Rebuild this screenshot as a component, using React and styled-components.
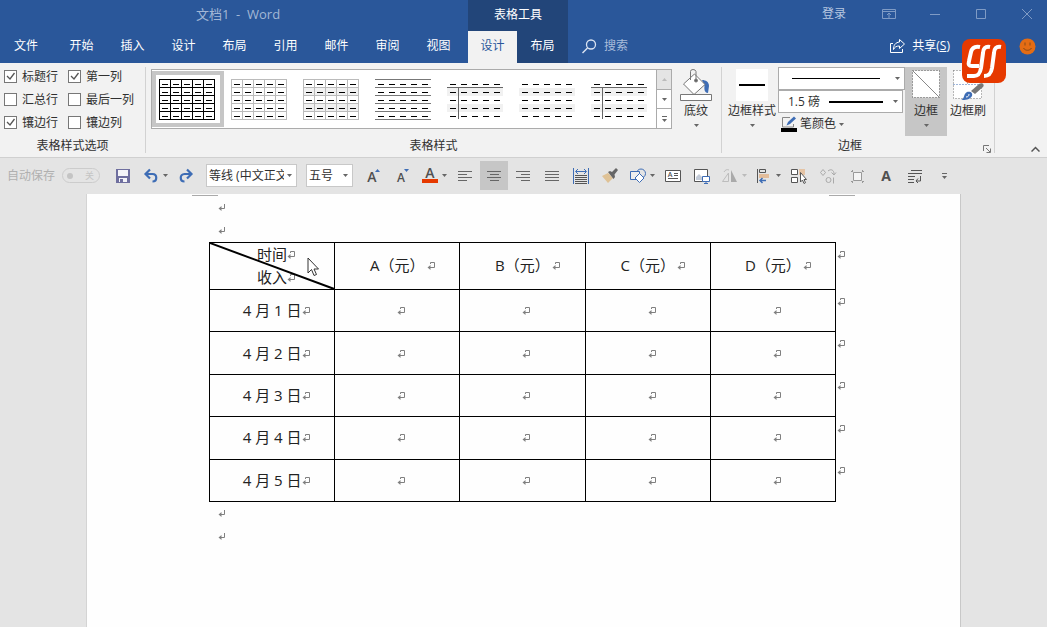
import React from "react";
import styled, { createGlobalStyle, css } from "styled-components";

const color = {
  blue: "#2a579a",
  darkBlue: "#224579",
  ribbon: "#f2f2f2",
  bar: "#e4e4e4",
  active: "#c6c6c6",
  border: "#ababab",
  text: "#303030",
  accent: "#3e6db5",
  red: "#e63900",
};

const GlobalStyle = createGlobalStyle`
  * {
    box-sizing: border-box;
  }

  body {
    margin: 0;
    background: ${color.bar};
    color: ${color.text};
    font: 12px/18px "Open Sans", "Noto Sans CJK SC", sans-serif;
  }

  button, select, input {
    margin: 0;
    padding: 0;
    font: inherit;
    color: inherit;
  }

  button {
    border: 0;
    background: none;
  }

  svg {
    display: block;
    flex-shrink: 0;
  }
`;

const Window = styled.div`
  position: relative;
  display: flex;
  flex-direction: column;
  min-height: 100vh;
  overflow: hidden;
`;

/* header */

const Header = styled.header`
  display: flex;
  height: 63px;
  background: ${color.blue};
  color: #fff;
`;

const HeaderBlock = styled.div`
  display: flex;
  flex-direction: column;
  flex: ${(props) => (props.$grow ? "1" : "none")};
  background: ${(props) => (props.$dark ? color.darkBlue : "none")};
`;

const TitleRow = styled.div`
  display: flex;
  align-items: center;
  justify-content: ${(props) => (props.$end ? "flex-end" : "center")};
  height: 31px;
  padding: ${(props) => (props.$end ? "0 0 4px" : "0 0 2px")};
`;

const DocTitle = styled.h1`
  margin: 0;
  padding: 0 0 2px 8px;
  font-size: 13px;
  font-weight: 400;
  color: #a3b7d6;
  white-space: pre;
`;

const Tabs = styled.nav`
  display: flex;
  height: 32px;
  padding-right: ${(props) => (props.$main ? "4px" : "0")};
`;

const Tab = styled.button`
  width: ${(props) => (props.$first ? "56px" : "51px")};
  padding: 0 ${(props) => (props.$first ? "4px" : "0")} 3px 0;
  color: #fff;

  ${(props) =>
    props.$active &&
    css`
      width: 49px;
      background: ${color.ribbon};
      color: ${color.blue};
    `}
`;

const ToolRow = styled.div`
  display: flex;
  align-items: center;
  justify-content: space-between;
  height: 32px;
  padding: 0 11px 2px 14px;
`;

const HeaderButton = styled.button`
  display: flex;
  align-items: center;
  gap: 7px;
  color: ${(props) => (props.$dim ? "#a9bcda" : "#fff")};
`;

const WindowButton = styled.button`
  display: flex;
  align-items: center;
  justify-content: center;
  width: 46px;
  height: 24px;
  color: #7f9bc5;

  &:last-child {
    margin-right: -3px;
  }
`;

const SignIn = styled.button`
  margin-right: 20px;
  color: #b8c8e0;
`;

const Account = styled.div`
  display: flex;
  align-items: center;
  gap: 69px;
`;

const Badge = styled.div`
  position: absolute;
  top: 39px;
  right: 41px;
  width: 44px;
  height: 44px;
`;

/* ribbon */

const Ribbon = styled.section`
  display: flex;
  height: 95px;
  border-bottom: 1px solid #d0d0d0;
  background: ${color.ribbon};
`;

const Group = styled.fieldset`
  position: relative;
  display: flex;
  flex-direction: column;
  justify-content: space-between;
  min-width: 0;
  margin: 4px 0;
  padding: 0;
  border: 0;
  border-right: 1px solid #d2d2d2;
`;

const GroupBody = styled.div`
  display: flex;
  align-items: flex-start;
  gap: ${(props) => props.$gap || "0"};
  padding: ${(props) => props.$pad || "0"};
`;

const GroupName = styled.div`
  height: 14px;
  padding-right: ${(props) => (props.$launcher ? "16px" : "0")};
  line-height: 14px;
  text-align: center;
`;

const Launcher = styled.button`
  position: absolute;
  right: 3px;
  bottom: 0;
`;

const Options = styled.div`
  display: grid;
  grid-template-columns: 64px 77px;
  grid-auto-rows: 23px;
`;

const CheckLabel = styled.label`
  display: flex;
  align-items: center;
  align-self: start;
  gap: 5px;
  height: 19px;
  white-space: nowrap;
`;

const CheckBox = styled.span`
  display: grid;
  width: 13px;
  height: 13px;
  border: 1px solid #777;
  background: #fff;

  input, svg {
    grid-area: 1 / 1;
  }

  input {
    width: 11px;
    height: 11px;
    appearance: none;
  }

  svg {
    display: none;
    pointer-events: none;
  }

  input:checked + svg {
    display: block;
  }
`;

const Gallery = styled.div`
  display: flex;
  height: 60px;
  margin-top: 2px;
  border: 1px solid ${color.border};
  background: #fff;
`;

const Thumb = styled.button`
  display: flex;
  align-items: center;
  width: 72px;
  height: 56px;
  margin-top: 1px;
  padding-left: 3px;
  border: 4px solid ${(props) => (props.$selected ? color.active : "transparent")};
`;

const Scroller = styled.div`
  display: flex;
  flex-direction: column;
  width: 15px;
  border-left: 1px solid ${color.border};

  button {
    display: flex;
    flex: 1;
    align-items: center;
    justify-content: center;
  }

  button + button {
    border-top: 1px solid ${color.border};
  }

  button:disabled {
    background: #e4e4e4;
    color: #bbb;
  }
`;

const BigButton = styled.button`
  display: flex;
  flex-direction: column;
  align-items: center;
  width: ${(props) => props.$width};
  height: 69px;
  padding-top: 2px;
  background: ${(props) => (props.$active ? color.active : "none")};
  white-space: nowrap;

  > svg + svg {
    margin-top: 4px;
  }
`;

const Fields = styled.div`
  display: flex;
  flex-direction: column;
  align-items: flex-start;
  width: 127px;
`;

const SelectBox = styled.div`
  display: grid;
  align-items: center;
  width: ${(props) => props.$width};
  height: 23px;
  border: 1px solid ${(props) => (props.$light ? "#c8c8c8" : color.border)};
  background: #fff;

  > * {
    grid-area: 1 / 1;
  }

  > svg {
    pointer-events: none;
  }
`;

const Select = styled.select`
  width: 100%;
  height: 21px;
  padding: 0 ${(props) => (props.$tight ? "12px" : "15px")} 0
    ${(props) => (props.$tight ? "2px" : "9px")};
  border: 0;
  appearance: none;
  background: none;
  overflow: hidden;
`;

const ArrowSlot = styled.span`
  justify-self: end;
  padding-right: 4px;
  pointer-events: none;
`;

const PenButton = styled.button`
  display: flex;
  align-items: center;
  gap: 3px;
  height: 22px;
  padding-left: 3px;
`;

const Collapse = styled.button`
  align-self: flex-end;
  margin: 0 7px 5px auto;
`;

/* quick access bar */

const QuickBar = styled.div`
  display: flex;
  align-items: center;
  gap: 1px;
  height: 36px;
  padding: 0 0 1px 7px;
`;

const AutoSave = styled.label`
  display: flex;
  align-items: center;
  gap: 7px;
  width: 101px;
  color: #b0b0b0;
  white-space: nowrap;
`;

const Toggle = styled.span`
  display: flex;
  align-items: center;
  justify-content: space-between;
  width: 38px;
  height: 15px;
  padding: 0 5px 0 4px;
  border: 1px solid #ccc;
  border-radius: 8px;
  font-size: 9px;
  line-height: 12px;
  color: #c4c4c4;

  input {
    width: 6px;
    height: 6px;
    border-radius: 50%;
    appearance: none;
    background: #c4c4c4;
  }
`;

const Tool = styled.button`
  display: flex;
  align-items: center;
  justify-content: ${(props) => (props.$split ? "flex-start" : "center")};
  gap: 4px;
  flex-shrink: 0;
  width: ${(props) => (props.$split ? "33px" : "28px")};
  height: 29px;
  padding-left: ${(props) => (props.$split ? "5px" : "0")};
  background: ${(props) => (props.$active ? color.active : "none")};
  color: ${(props) => (props.disabled ? "#bdbdbd" : "#555")};

  svg {
    overflow: visible;
  }

  text {
    fill: #505050;
    stroke: none;
    font-weight: ${(props) => (props.$bold ? "700" : "600")};
    text-anchor: middle;
  }
`;

const Combos = styled.div`
  display: flex;
  gap: 9px;
  padding: 0 5px;
`;

/* document */

const Page = styled.main`
  flex: 1;
  width: 100%;
  max-width: 875px;
  min-height: 433px;
  margin: 0 auto;
  border-left: 1px solid #d4d4d4;
  border-right: 1px solid #c8c8c8;
  background: #fefefe;
`;

const Corners = styled.div`
  display: flex;
  justify-content: space-between;
  height: 2px;
  padding: 0 105px;

  span {
    width: 26px;
    border-bottom: 1px solid #aaa;
  }
`;

const Content = styled.div`
  padding-left: 122px;
`;

const Paragraph = styled.p`
  display: flex;
  align-items: center;
  height: 23px;
  margin: 0;
  padding-left: 9px;
`;

const Table = styled.table`
  width: 644px;
  height: 260px;
  border-collapse: collapse;
  table-layout: fixed;
  color: #222;
  font-size: 15px;
  line-height: 23px;
  text-align: center;

  th, td {
    padding: 0;
    border: 1px solid #000;
    font-weight: 400;
  }

  thead tr {
    height: 47px;
  }

  thead th + th {
    padding-bottom: 2px;
  }
`;

const RowEnd = styled.td`
  && {
    width: 17px;
    padding-left: 1px;
    border: 0;
    text-align: left;
    vertical-align: top;
    line-height: 22px;
  }
`;

const Split = styled.th`
  position: relative;

  div {
    height: 23px;
    line-height: 22px;
  }

  > svg {
    position: absolute;
    inset: 0;
    width: 100%;
    height: 100%;
  }
`;

const Mark = styled.svg`
  && {
    display: inline-block;
  }
  width: 8px;
  height: 8px;
  margin-left: ${(props) => (props.$gap ? "2px" : "0")};
  margin-right: ${(props) => (props.$gap ? "-10px" : "-8px")};
  vertical-align: 1px;
  fill: none;
  stroke: #808080;
`;

const Pointer = styled.svg`
  position: absolute;
  top: 257px;
  left: 307px;
`;

function Arrow({ fill = "#666" }) {
  return (
    <svg width="5" height="3" viewBox="0 0 5 3">
      <path d="M0 0h5L2.5 3z" fill={fill} />
    </svg>
  );
}

function MoreArrow() {
  return (
    <svg width="7" height="6">
      <path d="M1 .5h5" stroke="#666" />
      <path d="M1 3h5L3.500 6z" fill="#666" />
    </svg>
  );
}

function CellMark({ gap }) {
  return (
    <Mark viewBox="0 0 8 8" $gap={gap} aria-hidden="true">
      <path d="M3.500 2V.5h4v5H2" />
      <path d="M3.500 3v5L.5 5.500z" fill="#808080" stroke="none" />
    </Mark>
  );
}

function ParaMark() {
  return (
    <Mark viewBox="0 0 8 8" aria-hidden="true">
      <path d="M6.500 0v4.500H2" />
      <path d="M3.500 2v5L.5 4.500z" fill="#808080" stroke="none" />
    </Mark>
  );
}

function Icon({ size = 16, children, stroke = "currentColor" }) {
  return (
    <svg width={size} height={size} viewBox={`0 0 ${size} ${size}`} fill="none" stroke={stroke}>
      {children}
    </svg>
  );
}

function TableThumb({ line, rows, header, shade }) {
  const steps = [0, 1, 2, 3, 4, 5];
  return (
    <svg width="56" height="41" viewBox="0 0 56 41" shapeRendering="crispEdges">
      {shade && <path d="M0 8.500h56v8H0zM0 24.500h56v8H0z" fill="#f1f1f1" />}
      {(line || rows) &&
        steps.map((i) => <path key={i} d={`M0 ${i * 8 + 0.5}h56`} stroke={line || "#777"} />)}
      {line && steps.map((i) => <path key={i} d={`M${i * 11 + 0.5} 0v41`} stroke={line} />)}
      {header && <path d="M0 8.500h56M11.500 8v32" stroke="#666" />}
      {[5, 13, 21, 29, 37].map((y) => (
        <path key={y} d={`M3 ${y + 0.5}h51`} stroke="#000" strokeDasharray="6 5" />
      ))}
    </svg>
  );
}

function Check({ label, checked }) {
  return (
    <CheckLabel>
      <CheckBox>
        <input type="checkbox" defaultChecked={checked} />
        <svg width="11" height="11" fill="none" stroke="#555">
          <path d="M2 5l3 3 4.500-6" strokeWidth="1.300" />
        </svg>
      </CheckBox>
      {label}
    </CheckLabel>
  );
}

const tabs = ["开始", "插入", "设计", "布局", "引用", "邮件", "审阅", "视图"];

const options = [
  ["标题行", true],
  ["第一列", true],
  ["汇总行", false],
  ["最后一列", false],
  ["镶边行", true],
  ["镶边列", false],
];

const thumbs = [
  { line: "#000" },
  { line: "#bbb" },
  { line: "#bbb", shade: true },
  { rows: true },
  { header: true, shade: true },
  { shade: true },
  { header: true, shade: true },
];

const aligns = [
  { name: "左对齐", d: "M0 3.500h14M0 6.500h9M0 9.500h14M0 12.500h9" },
  { name: "居中", d: "M0 3.500h14M3 6.500h9M0 9.500h14M3 12.500h9", active: true },
  { name: "右对齐", d: "M0 3.500h14M5 6.500h9M0 9.500h14M5 12.500h9" },
  { name: "两端对齐", d: "M0 3.500h14M0 6.500h14M0 9.500h14M0 12.500h14" },
];

function TopBar() {
  return (
    <Header>
      <HeaderBlock>
        <TitleRow>
          <DocTitle>{"文档1  -  Word"}</DocTitle>
        </TitleRow>
        <Tabs $main>
          <Tab $first>文件</Tab>
          {tabs.map((name) => (
            <Tab key={name}>{name}</Tab>
          ))}
        </Tabs>
      </HeaderBlock>
      <HeaderBlock $dark>
        <TitleRow>表格工具</TitleRow>
        <Tabs>
          <Tab $active>设计</Tab>
          <Tab>布局</Tab>
        </Tabs>
      </HeaderBlock>
      <HeaderBlock $grow>
        <TitleRow $end>
          <SignIn>登录</SignIn>
          <WindowButton aria-label="功能区显示选项">
            <Icon size={14}>
              <path d="M.5 2.500h13v9H.5zM.5 4.500h13M7 11V6M5 8l2-2 2 2" />
            </Icon>
          </WindowButton>
          <WindowButton aria-label="最小化">
            <Icon size={10}>
              <path d="M0 5.500h10" />
            </Icon>
          </WindowButton>
          <WindowButton aria-label="最大化">
            <Icon size={10}>
              <path d="M.5 .5h9v9h-9z" />
            </Icon>
          </WindowButton>
          <WindowButton aria-label="关闭">
            <Icon size={10}>
              <path d="M0 0l10 10M10 0L0 10" />
            </Icon>
          </WindowButton>
        </TitleRow>
        <ToolRow>
          <HeaderButton $dim>
            <Icon size={15} stroke="#dbe4f2">
              <circle cx="9" cy="5.500" r="4.500" strokeWidth="1.300" />
              <path d="M5.500 9L.5 14" strokeWidth="1.500" />
            </Icon>
            搜索
          </HeaderButton>
          <Account>
            <HeaderButton>
              <Icon>
                <path d="M4 5.500H1.500v9h12V11" />
                <path d="M10.500 1.500L15.500 6l-5 4.500V8C7.500 8 5.500 9 4.500 11.500 4.500 7 6.500 4.500 10.500 4z" />
              </Icon>
              <span>
                共享(<u>S</u>)
              </span>
            </HeaderButton>
            <HeaderButton aria-label="反馈">
              <svg width="17" height="17">
                <circle cx="8.500" cy="8.500" r="8" fill="#e46c14" />
                <path
                  d="M4.500 10c1.500 3 6.500 3 8 0M6 4.500v3M11 4.500v3"
                  fill="none"
                  stroke="#8a4a16"
                />
              </svg>
            </HeaderButton>
          </Account>
        </ToolRow>
      </HeaderBlock>
    </Header>
  );
}

function StyleRibbon() {
  return (
    <Ribbon>
      <Group>
        <GroupBody $pad="0 0 0 4px">
          <Options>
            {options.map(([label, checked]) => (
              <Check key={label} label={label} checked={checked} />
            ))}
          </Options>
        </GroupBody>
        <GroupName>表格样式选项</GroupName>
      </Group>
      <Group>
        <GroupBody $pad="0 5px" $gap="4px">
          <Gallery>
            {thumbs.map((thumb, i) => (
              <Thumb key={i} $selected={i === 0} aria-label={`表格样式 ${i + 1}`}>
                <TableThumb {...thumb} />
              </Thumb>
            ))}
            <Scroller>
              <button disabled aria-label="上一行">
                <svg width="5" height="3">
                  <path d="M0 3h5L2.500 0z" fill="#bbb" />
                </svg>
              </button>
              <button aria-label="下一行">
                <Arrow />
              </button>
              <button aria-label="其他">
                <MoreArrow />
              </button>
            </Scroller>
          </Gallery>
          <BigButton $width="40px">
            <svg width="32" height="33" fill="none" stroke="#777">
              <path d="M22 11c4 0 7 2 7 6l-1 7c-3 0-4-3-3.500-7z" fill={color.accent} stroke="none" />
              <path d="M14.500 5L25 15.500 14 25.500 3.500 15z" fill="#fff" />
              <path d="M10.500 11V2.500q0-2 2.500-2t3 2V11" />
              <circle cx="16" cy="11.500" r="1.500" fill="#666" />
              <path d="M.5 25.500h31v6H.5z" fill="#fff" />
            </svg>
            底纹
            <Arrow />
          </BigButton>
        </GroupBody>
        <GroupName>表格样式</GroupName>
      </Group>
      <Group>
        <GroupBody $pad="0 5px 0 4px">
          <BigButton $width="52px">
            <svg width="32" height="33">
              <path d="M0 0h32v32H0z" fill="#fff" />
              <path d="M3 16h26" stroke="#000" strokeWidth="2" />
            </svg>
            边框样式
            <Arrow />
          </BigButton>
          <Fields>
            <SelectBox $width="127px">
              <Select aria-label="笔样式" />
              <svg width="101" height="3">
                <path d="M13 1.500h88" stroke="#000" />
              </svg>
              <ArrowSlot>
                <Arrow />
              </ArrowSlot>
            </SelectBox>
            <SelectBox $width="125px">
              <Select aria-label="笔划粗细">
                <option>1.5 磅</option>
              </Select>
              <svg width="104" height="4">
                <path d="M50 2h54" stroke="#000" strokeWidth="2" />
              </svg>
              <ArrowSlot>
                <Arrow />
              </ArrowSlot>
            </SelectBox>
            <PenButton>
              <svg width="16" height="16" fill="none">
                <path d="M9 1.500H1.500V11h11V8" stroke="#888" />
                <path d="M5.500 9.500l1.500-3.500L13 .5l2 2-6 5.500z" fill={color.accent} />
                <path d="M0 12h16v4H0z" fill="#000" />
              </svg>
              笔颜色
              <Arrow />
            </PenButton>
          </Fields>
          <BigButton $width="42px" $active>
            <svg width="30" height="33" fill="none">
              <path d="M1.500 1.500h27v27h-27z" fill="#fff" stroke="#555" strokeDasharray="1 2" />
              <path d="M2 2l26 26" stroke="#888" />
            </svg>
            边框
            <Arrow />
          </BigButton>
          <BigButton $width="42px">
            <svg width="34" height="33" fill="none">
              <path
                d="M2.500 1.500h28v28h-28z"
                fill="#fff"
                stroke="#777"
                strokeDasharray="1 2"
              />
              <path d="M16.500 1.500v14" stroke="#777" strokeDasharray="1 2" />
              <path d="M2.500 15.500h28" stroke={color.accent} strokeDasharray="1 2" />
              <path
                d="M10 31c4-1 2-6 6-8 4-1 6 1.500 5 4-2 4-7 4-11 4z"
                fill={color.accent}
              />
              <path d="M20 22l8-7c3-2 6 .500 4 3L24 25z" fill="#777" />
              <path d="M15 28c2 0 3-1 3-3" stroke="#fff" />
            </svg>
            边框刷
          </BigButton>
        </GroupBody>
        <GroupName $launcher>边框</GroupName>
        <Launcher aria-label="边框设置">
          <Icon size={8} stroke="#777">
            <path d="M.5 6V.5H6M3 3l4 4M7.500 3.500v4h-4" />
          </Icon>
        </Launcher>
      </Group>
      <Collapse aria-label="折叠功能区">
        <svg width="9" height="6" fill="none" stroke="#555" strokeWidth="1.500">
          <path d="M.5 5.500l4-4 4 4" />
        </svg>
      </Collapse>
    </Ribbon>
  );
}

function QuickTools() {
  return (
    <QuickBar>
      <AutoSave>
        自动保存
        <Toggle>
          <input type="checkbox" disabled />关
        </Toggle>
      </AutoSave>
      <Tool aria-label="保存">
        <svg width="14" height="14">
          <path d="M0 0h14v14H0z" fill="#6f6f9f" />
          <path d="M2 1h10v6H2zM3 9h8v4H3z" fill="#f4f4f8" />
          <path d="M4 10h3v3H4z" fill="#6f6f9f" />
        </svg>
      </Tool>
      <Tool $split aria-label="撤消">
        <Icon stroke={color.accent}>
          <path d="M7 1.500L2.500 6 7 10.500M3 6h6.500c5 0 5 7.500 0 7.500" strokeWidth="2.200" />
        </Icon>
        <Arrow />
      </Tool>
      <Tool aria-label="恢复">
        <Icon stroke={color.accent}>
          <path d="M9 1.500L13.500 6 9 10.500M13 6H6.500c-5 0-5 7.500 0 7.500" strokeWidth="2.200" />
        </Icon>
      </Tool>
      <Combos>
        <SelectBox $width="91px" $light>
          <Select $tight aria-label="字体">
            <option>等线 (中文正文)</option>
          </Select>
          <ArrowSlot>
            <Arrow />
          </ArrowSlot>
        </SelectBox>
        <SelectBox $width="47px" $light>
          <Select $tight aria-label="字号">
            <option>五号</option>
          </Select>
          <ArrowSlot>
            <Arrow />
          </ArrowSlot>
        </SelectBox>
      </Combos>
      <Tool aria-label="增大字号">
        <Icon>
          <text x="7" y="14" fontSize="14">
            A
          </text>
          <path d="M10 4h5l-2.500-3z" fill={color.accent} stroke="none" />
        </Icon>
      </Tool>
      <Tool aria-label="减小字号">
        <Icon>
          <text x="7" y="14" fontSize="12">
            A
          </text>
          <path d="M10 1h5l-2.500 3z" fill={color.accent} stroke="none" />
        </Icon>
      </Tool>
      <Tool $split aria-label="字体颜色">
        <Icon>
          <text x="8" y="10" fontSize="14">
            A
          </text>
          <path d="M0 11h16v4H0z" fill={color.red} stroke="none" />
        </Icon>
        <Arrow />
      </Tool>
      {aligns.map((align) => (
        <Tool key={align.name} $active={align.active} aria-label={align.name}>
          <svg width="14" height="16" stroke="#666">
            <path d={align.d} />
          </svg>
        </Tool>
      ))}
      <Tool aria-label="分散对齐">
        <Icon>
          <path
            d="M.5 0v16M15.500 0v16M3 3.500h10M5 1L2.500 3.500 5 6M11 1l2.500 2.500L11 6"
            stroke={color.accent}
          />
          <path d="M2 7.500h12M2 9.500h12M2 11.500h12M2 13.500h12M2 15.500h12" />
        </Icon>
      </Tool>
      <Tool aria-label="格式刷">
        <Icon stroke="none">
          <path d="M0 8l6-3 5 5-5 5z" fill="#dfc296" />
          <path d="M6 4l2-1 2 1 4-4 2 2-3.500 4.500.500 2.500-1.500 2z" fill="#666" />
        </Icon>
      </Tool>
      <Tool $split aria-label="形状">
        <Icon>
          <circle cx="11" cy="5.500" r="4.500" stroke={color.accent} />
          <path d="M.5 3.500h9v8h-9z" fill="#eee" stroke={color.accent} />
          <path d="M9.500 5.500L14 10l-4.500 4.500L5 10z" fill="#fff" stroke={color.accent} />
        </Icon>
        <Arrow />
      </Tool>
      <Tool aria-label="文本框">
        <Icon>
          <path d="M.5 2.500h15v11H.5z" fill="#fff" />
          <text x="5" y="9" fontSize="7">
            A
          </text>
          <path d="M9 5.500h4M9 7.500h4M3 10.500h10" />
        </Icon>
      </Tool>
      <Tool aria-label="图片">
        <Icon>
          <path d="M.5 1.500h13v12H.5z" fill="#fff" />
          <path d="M2 12V9l3-3 4 4v2z" fill="#c3cbd8" stroke="none" />
          <path d="M8.500 8.500h7v5h-7zM12 14v2M10 15.500h4" fill="#fff" stroke={color.accent} />
        </Icon>
      </Tool>
      <Tool $split disabled aria-label="旋转">
        <Icon>
          <path d="M6.500 5v8.500H.5zM2 4c1-2 3-3 5-2" />
          <path d="M9 2v12h6z" fill="#aaa" stroke="none" />
        </Icon>
        <Arrow fill="#bbb" />
      </Tool>
      <Tool $split aria-label="对齐对象">
        <Icon>
          <path d="M1.500 1v14" />
          <path d="M3.500 1.500h6v3h-6z" />
          <path d="M3 6h10v4H3z" fill="#e3bd9b" stroke="none" />
          <path d="M4 12.500h6M6.500 10L4 12.500 6.500 15" stroke={color.accent} strokeWidth="1.500" />
        </Icon>
        <Arrow />
      </Tool>
      <Tool aria-label="选择对象">
        <Icon>
          <path d="M.5 1.500h6v5h-6zM.5 9.500h6v5h-6z" fill="#fff" />
          <path d="M8 1h6v6H8z" fill="#e5c4a5" stroke="none" />
          <path d="M9.500 4.500V14l2-2 1.500 3.500 1.500-.8L13 11.500h2.500z" fill="#fff" />
        </Icon>
      </Tool>
      <Tool disabled aria-label="更改形状">
        <Icon stroke="#aaa">
          <path d="M3 1.500l2.500 3L3 7.500l-2.500-3zM8 3c3-2.500 6-1 6 3M11.500 4.500L14 7l2-2.500" />
          <circle cx="8.500" cy="12" r="2.500" />
          <path d="M13.500 9.500v6" />
        </Icon>
      </Tool>
      <Tool disabled aria-label="组合">
        <Icon stroke="#999">
          <path d="M4.500 4.500h8v8h-8z" fill="#f4f4f4" />
          <path d="M2 3.500h2M13 3.500h2M2 13.500h2M13 13.500h2M3.500 2v2M13.500 2v2M3.500 13v2M13.500 13v2" />
        </Icon>
      </Tool>
      <Tool $bold aria-label="字体">
        <Icon>
          <text x="8" y="13" fontSize="14">
            A
          </text>
        </Icon>
      </Tool>
      <Tool aria-label="段落标记">
        <Icon>
          <path d="M4 2.500h11M1 5.500h14M1 8.500h7M1 11.500h6M1 14.500h6M13.500 8v5H9M11 10.500L9 13l2 2" />
        </Icon>
      </Tool>
      <Tool aria-label="自定义快速访问工具栏">
        <MoreArrow />
      </Tool>
    </QuickBar>
  );
}

function DocumentPage() {
  const names = ["A", "B", "C", "D"];
  return (
    <Page>
      <Corners>
        <span />
        <span />
      </Corners>
      <Content>
        <Paragraph>
          <ParaMark />
        </Paragraph>
        <Paragraph>
          <ParaMark />
        </Paragraph>
        <Table>
          <thead>
            <tr>
              <Split>
                <div>
                  时间
                  <CellMark />
                </div>
                <div>
                  收入
                  <CellMark />
                </div>
                <svg viewBox="0 0 125 46" preserveAspectRatio="none">
                  <path d="M0 0l125 46" stroke="#000" strokeWidth="2" />
                </svg>
              </Split>
              {names.map((name) => (
                <th key={name}>
                  {name}（元）
                  <CellMark gap />
                </th>
              ))}
              <RowEnd>
                <CellMark />
              </RowEnd>
            </tr>
          </thead>
          <tbody>
            {[1, 2, 3, 4, 5].map((day) => (
              <tr key={day}>
                <td>
                  4 月 {day} 日
                  <CellMark />
                </td>
                {names.map((name) => (
                  <td key={name}>
                    <CellMark />
                  </td>
                ))}
                <RowEnd>
                  <CellMark />
                </RowEnd>
              </tr>
            ))}
          </tbody>
        </Table>
        <Paragraph>
          <ParaMark />
        </Paragraph>
        <Paragraph>
          <ParaMark />
        </Paragraph>
      </Content>
    </Page>
  );
}

function App() {
  return (
    <Window>
      <GlobalStyle />
      <TopBar />
      <StyleRibbon />
      <QuickTools />
      <DocumentPage />
      <Badge>
        <svg width="44" height="44" fill="none" stroke="#fff" strokeWidth="4">
          <rect width="44" height="44" rx="8" fill={color.red} stroke="none" />
          <path d="M18 8c-5-1-8 1-9 5L7 22c-1 4 0 5 3 5h7" />
          <path d="M28 8c-5-1-7 2-7 6l-2 15c-1 6-3 8-7 8H5" />
          <path d="M39 8c-5-1-7 2-7 6l-2 15c-1 6-3 8-8 8" />
        </svg>
      </Badge>
      <Pointer width="13" height="20" aria-hidden="true">
        <path d="M1 1v15l3.500-3.500L7 18.500l2.500-1L7 12h4.500z" fill="#fff" stroke="#333" />
      </Pointer>
    </Window>
  );
}

export default App;
